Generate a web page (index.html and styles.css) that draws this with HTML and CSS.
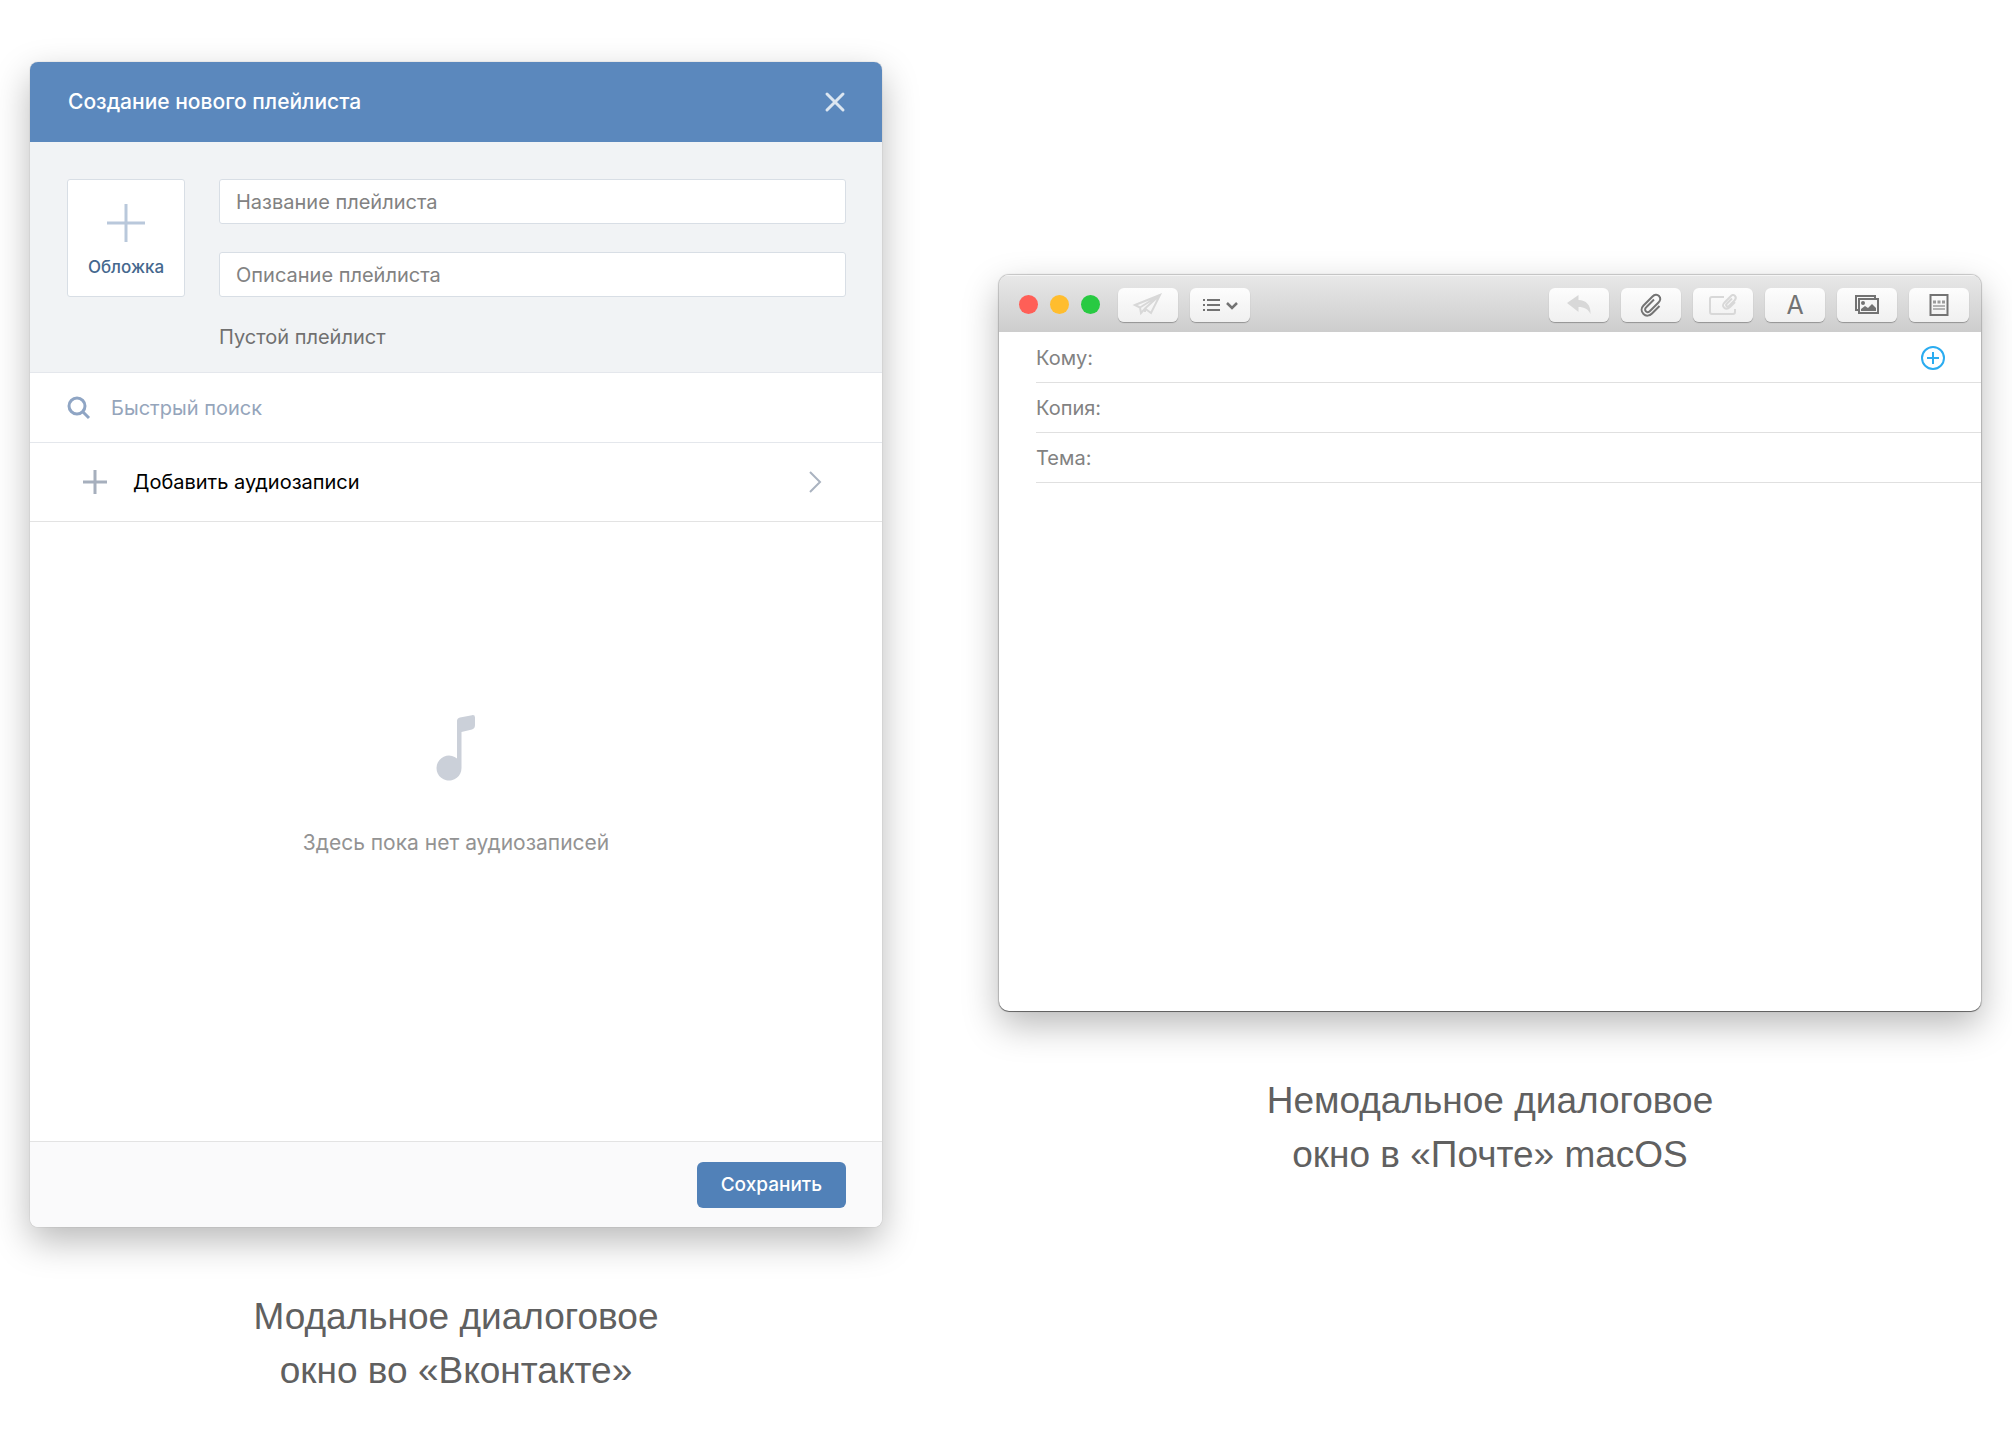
FILE: index.html
```
<!DOCTYPE html>
<html lang="ru">

<head>
    <meta charset="UTF-8">
    <meta name="viewport" content="width=device-width, initial-scale=1.0">
    <title>Модальные и немодальные окна</title>
    <link rel="stylesheet" href="styles.css">
</head>

<body>
    <main class="examples">
        <figure class="example">
            <form class="window playlist">
                <header class="playlist-header">
                    <h1>Создание нового плейлиста</h1>
                    <button type="button" class="close" aria-label="Закрыть">
                        <svg width="20" height="20" viewBox="0 0 20 20">
                            <path d="M2 2l16 16M18 2L2 18" />
                        </svg>
                    </button>
                </header>

                <section class="playlist-info">
                    <button type="button" class="cover">
                        <svg width="38" height="38" viewBox="0 0 38 38">
                            <path d="M19 0v38M0 19h38" />
                        </svg>
                        <span>Обложка</span>
                    </button>
                    <div class="fields">
                        <input type="text" aria-label="Название плейлиста" placeholder="Название плейлиста">
                        <input type="text" aria-label="Описание плейлиста" placeholder="Описание плейлиста">
                        <p>Пустой плейлист</p>
                    </div>
                </section>

                <label class="search">
                    <svg width="24" height="24" viewBox="0 0 24 24">
                        <circle cx="10" cy="10" r="8" />
                        <path d="M15 15l7 7" />
                    </svg>
                    <input type="search" aria-label="Быстрый поиск" placeholder="Быстрый поиск">
                </label>

                <button type="button" class="add">
                    <svg class="plus" width="24" height="24" viewBox="0 0 24 24">
                        <path d="M12 0v24M0 12h24" />
                    </svg>
                    <span>Добавить аудиозаписи</span>
                    <svg class="chevron" width="14" height="22" viewBox="0 0 14 22">
                        <path d="M2 1l10 10L2 21" />
                    </svg>
                </button>

                <section class="empty">
                    <svg width="38" height="66" viewBox="1 0 38 66">
                        <path d="M21 6Q21 3 24 2.500L36 .2Q39 -.3 39 2.500V10Q39 13.500 36 14.500L25.500 17V53A12.500 12.500 0 1 1 21 43.500Z" />
                    </svg>
                    <p>Здесь пока нет аудиозаписей</p>
                </section>

                <footer class="playlist-footer">
                    <button type="submit" class="save">Сохранить</button>
                </footer>
            </form>
            <figcaption>Модальное диалоговое<br>окно во «Вконтакте»</figcaption>
        </figure>

        <figure class="example example-mail">
            <form class="window mail">
                <header class="toolbar">
                    <div class="lights">
                        <button type="button" class="light red" aria-label="Закрыть"></button>
                        <button type="button" class="light yellow" aria-label="Свернуть"></button>
                        <button type="button" class="light green" aria-label="Развернуть"></button>
                    </div>
                    <div class="tools">
                        <button type="button" class="tool disabled" aria-label="Отправить">
                            <svg width="28" height="22" viewBox="0 0 28 22">
                                <path d="M1 11L26 1L17 19L11 14.500L7 19L6 13.500ZM6 13.500L26 1L11 14.500V18" />
                            </svg>
                        </button>
                        <button type="button" class="tool" aria-label="Поля заголовка">
                            <svg width="36" height="16" viewBox="0 0 36 16">
                                <path d="M1 3h2M5 3h13M1 8h2M5 8h13M1 13h2M5 13h13" />
                                <path d="M25 6l5 5 5-5" stroke-width="2.500" />
                            </svg>
                        </button>
                    </div>
                    <div class="tools tools-right">
                        <button type="button" class="tool disabled" aria-label="Ответить">
                            <svg width="26" height="22" viewBox="0 0 26 22">
                                <path class="fill" d="M1 9L12.500 1V6C20 6 25 11 24.500 20C22 15 18.500 13 12.500 13V18Z" />
                            </svg>
                        </button>
                        <button type="button" class="tool" aria-label="Прикрепить файл">
                            <svg width="24" height="24" viewBox="0 0 24 24">
                                <path d="M20.500 13L13 20.500C10.500 23 7 23.500 4.500 21S2 15 4.500 12.500L13.500 3.500C15.500 1.500 18 1 20 3S21.500 7.500 19.500 9.500L11 18C9.500 19.500 8 19.500 6.800 18.300S6 15.300 7.500 14L15 6.500" />
                            </svg>
                        </button>
                        <button type="button" class="tool disabled" aria-label="Вложить исходные файлы">
                            <svg width="28" height="22" viewBox="0 0 28 22">
                                <path d="M15 3H3Q1 3 1 5V18Q1 20 3 20H24Q26 20 26 18V15" />
                                <path d="M26 8L21 13C19 15 17 15.500 15 13.500S14 10 16 8L21.500 2.500C23 1 24.500 .5 25.800 1.800S27 5 25.500 6.500L20 12C19 13 18 12.500 17.500 12S17 10.500 18 9.500L23 4.500" />
                            </svg>
                        </button>
                        <button type="button" class="tool letter" aria-label="Шрифты">A</button>
                        <button type="button" class="tool" aria-label="Фото">
                            <svg width="24" height="20" viewBox="0 0 24 20">
                                <path d="M3 15H1V1H20V3M4 4H23V18H4Z" />
                                <circle class="fill" cx="8" cy="8" r="2" />
                                <path class="fill" d="M6 16V14L10 11L13 13L17 9L21 13V16Z" />
                            </svg>
                        </button>
                        <button type="button" class="tool" aria-label="Бланк">
                            <svg width="20" height="22" viewBox="0 0 20 22">
                                <path d="M1.500 1H18.500V21H1.500Z" />
                                <path d="M4 8h3M8.500 8h3M13 8h3" stroke-width="3" opacity=".7" />
                                <path d="M4 12h12M4 15h12" stroke-width="1" />
                            </svg>
                        </button>
                    </div>
                </header>

                <div class="mail-fields">
                    <div class="mail-field">
                        <label for="to">Кому:</label>
                        <input type="text" id="to">
                        <button type="button" class="add-contact" aria-label="Добавить контакт">
                            <svg width="24" height="24" viewBox="0 0 24 24">
                                <circle cx="12" cy="12" r="11" />
                                <path d="M12 6v12M6 12h12" />
                            </svg>
                        </button>
                    </div>
                    <div class="mail-field">
                        <label for="copy">Копия:</label>
                        <input type="text" id="copy">
                    </div>
                    <div class="mail-field">
                        <label for="subject">Тема:</label>
                        <input type="text" id="subject">
                    </div>
                </div>
                <textarea class="message" aria-label="Текст письма"></textarea>
            </form>
            <figcaption>Немодальное диалоговое<br>окно в «Почте» macOS</figcaption>
        </figure>
    </main>
</body>

</html>
```
FILE: styles.css
```
:root {
    --blue: #5b88bd;
    --button: #5181b8;
    --panel: #f1f3f5;
    --line: #e4e7ec;
    --field-line: #d8dee5;
    --grey: #828282;
    --icon: #737373;
}

* {
    box-sizing: border-box;
    margin: 0;
    padding: 0;
}

body {
    background-color: #fff;
    font-family: Inter, "Liberation Sans", sans-serif;
    font-size: 20px;
    line-height: 24px;
}

button,
input,
textarea {
    appearance: none;
    border: none;
    outline: none;
    background: none;
    font: inherit;
    color: inherit;
}

button {
    cursor: pointer;
}

svg {
    display: block;
    flex: none;
    fill: none;
    stroke: currentColor;
    overflow: visible;
}

.examples {
    display: grid;
    grid-template-columns: 852fr 982fr;
    align-items: start;
    column-gap: 117px;
    padding: 62px 31px 40px 30px;
}

.example-mail {
    margin-top: 213px;
}

.window {
    display: flex;
    flex-direction: column;
    overflow: hidden;
    background-color: #fff;
}

figcaption {
    margin-top: 63px;
    font-family: "Liberation Sans", Arial, sans-serif;
    font-size: 37px;
    line-height: 54px;
    text-align: center;
    color: #606060;
}

/* playlist dialog */

.playlist {
    border-radius: 8px;
    box-shadow: 0 0 1px rgba(0, 0, 0, 0.4), 0 14px 36px rgba(0, 0, 0, 0.28);
}

.playlist-header {
    display: flex;
    align-items: center;
    justify-content: space-between;
    height: 80px;
    padding: 0 37px 0 38px;
    background-color: var(--blue);
    color: #fff;
}

.playlist-header h1 {
    font-size: 21px;
    font-weight: 500;
}

.close {
    color: #dce6f1;
    stroke-width: 3;
}

.close svg {
    stroke-linecap: round;
}

.playlist-info {
    display: flex;
    gap: 34px;
    padding: 37px 36px 23px 37px;
    background-color: var(--panel);
    border-bottom: 1px solid var(--line);
}

.cover {
    display: flex;
    flex-direction: column;
    align-items: center;
    flex: none;
    width: 118px;
    height: 118px;
    padding-top: 24px;
    background-color: #fff;
    border: 1px solid var(--field-line);
    border-radius: 3px;
    color: #45688e;
    font-size: 17px;
    font-weight: 500;
}

.cover svg {
    margin-bottom: 13px;
    color: #b9c8db;
    stroke-width: 3;
}

.fields {
    flex: 1;
    min-width: 0;
}

.fields input {
    display: block;
    width: 100%;
    height: 45px;
    margin-bottom: 28px;
    padding: 0 16px;
    background-color: #fff;
    border: 1px solid var(--field-line);
    border-radius: 3px;
}

.fields input::placeholder {
    color: var(--grey);
}

.fields p {
    color: #707070;
}

.search {
    display: flex;
    align-items: center;
    gap: 20px;
    height: 70px;
    padding: 0 37px;
    border-bottom: 1px solid var(--line);
}

.search svg {
    color: #8fa5c4;
    stroke-width: 3;
}

.search input {
    flex: 1;
    min-width: 0;
}

.search input::placeholder {
    color: #95a5bb;
}

.add {
    display: flex;
    align-items: center;
    height: 79px;
    padding: 0 60px 0 53px;
    border-bottom: 1px solid #e3e3e3;
    text-align: left;
}

.add .plus {
    margin-right: 26px;
    color: #a6afbd;
    stroke-width: 3;
}

.add .chevron {
    margin-left: auto;
    color: #aab3c0;
    stroke-width: 2;
}

.empty {
    display: flex;
    flex-direction: column;
    align-items: center;
    min-height: 619px;
    padding-top: 193px;
    color: #939393;
    font-size: 21px;
}

.empty svg {
    margin-bottom: 50px;
    fill: #cbd0d9;
    stroke: none;
}

.playlist-footer {
    display: flex;
    align-items: center;
    justify-content: flex-end;
    height: 86px;
    padding: 0 36px;
    background-color: #fafafb;
    border-top: 1px solid #e3e3e3;
}

.save {
    height: 46px;
    padding: 0 24px;
    background-color: var(--button);
    border-radius: 6px;
    color: #fff;
    font-size: 19px;
    font-weight: 500;
}

/* mail window */

.mail {
    border-radius: 10px;
    box-shadow: 0 0 1px 1px rgba(0, 0, 0, 0.2), 0 1px rgba(0, 0, 0, 0.4), 0 14px 36px rgba(0, 0, 0, 0.28);
}

.toolbar {
    display: flex;
    align-items: center;
    height: 57px;
    padding: 2px 12px 0 20px;
    background-image: linear-gradient(#e8e8e8, #cdcdcd);
    box-shadow: inset 0 1px #f5f5f5;
}

.lights {
    display: flex;
    gap: 12px;
    margin-right: 18px;
}

.light {
    width: 19px;
    height: 19px;
    border-radius: 50%;
}

.red {
    background-color: #ff5f57;
}

.yellow {
    background-color: #ffbd2e;
}

.green {
    background-color: #28ca42;
}

.tools {
    display: flex;
    gap: 12px;
}

.tools-right {
    margin-left: auto;
}

.tool {
    display: flex;
    align-items: center;
    justify-content: center;
    width: 60px;
    height: 34px;
    background-image: linear-gradient(#fdfdfd, #f0f0f0);
    border-radius: 6px;
    box-shadow: 0 1px 1px rgba(0, 0, 0, 0.3);
    color: var(--icon);
    stroke-width: 2;
}

.tool .fill {
    fill: currentColor;
    stroke: none;
}

.disabled {
    color: #d8d8d8;
}

.letter {
    font-size: 25px;
}

.mail-fields {
    padding: 1px 0 0 37px;
}

.mail-field {
    display: flex;
    align-items: center;
    height: 50px;
    padding-right: 36px;
    border-bottom: 1px solid #e0e0e0;
    color: var(--grey);
}

.mail-field input {
    flex: 1;
    min-width: 0;
    margin-left: 8px;
}

.add-contact {
    color: #2bacf0;
    stroke-width: 2;
}

.message {
    display: block;
    height: 528px;
    padding: 16px 37px;
    resize: none;
}
```
